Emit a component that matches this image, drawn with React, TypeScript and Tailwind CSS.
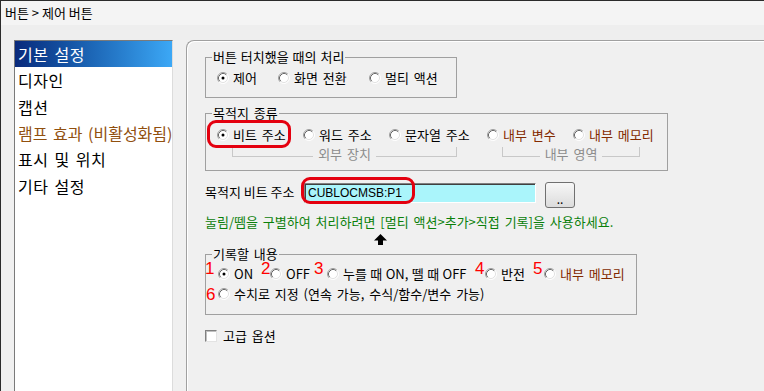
import React from "react";

const Radio = ({ checked = false }: { checked?: boolean }) => (
  <svg width="12" height="12" viewBox="0 0 12 12" className="shrink-0 block">
    <circle cx="6" cy="6" r="5" fill="#ffffff" />
    <path d="M2.11 9.89 A5.5 5.5 0 0 1 9.89 2.11" fill="none" stroke="#a0a0a0" strokeWidth="1" />
    <path d="M9.89 2.11 A5.5 5.5 0 0 1 2.11 9.89" fill="none" stroke="#ffffff" strokeWidth="1" />
    <path d="M2.82 9.18 A4.5 4.5 0 0 1 9.18 2.82" fill="none" stroke="#696969" strokeWidth="1" />
    <path d="M9.18 2.82 A4.5 4.5 0 0 1 2.82 9.18" fill="none" stroke="#e3e3e3" strokeWidth="1" />
    {checked && <circle cx="6" cy="6" r="1.5" fill="#000000" />}
  </svg>
);

const Opt = ({
  w,
  checked,
  label,
  color = "text-black",
  digit,
  digitPos,
  extra = "",
}: {
  w: string;
  checked?: boolean;
  label: string;
  color?: string;
  digit?: string;
  digitPos?: string;
  extra?: string;
}) => (
  <div className={`relative flex items-center h-[16px] shrink-0 ${w}`}>
    {digit && (
      <span
        className={`absolute text-[17px] leading-[12px] text-[#ff0000] font-['Liberation_Sans',sans-serif] ${digitPos}`}
      >
        {digit}
      </span>
    )}
    <Radio checked={checked} />
    <span className={`ml-[4px] text-[13px] leading-[16px] whitespace-nowrap ${color} ${extra}`}>{label}</span>
  </div>
);

const Bracket = ({ w, label, ml }: { w: string; label: string; ml: string }) => (
  <div className={`flex h-[18px] ${w} ${ml}`}>
    <div className="flex-1 h-[10px] border-l border-b border-[#c8c8c8]" />
    <span className="px-[5px] text-[13px] leading-[16px] text-[#8c8c8c] -mt-[1px]">{label}</span>
    <div className="flex-1 h-[10px] border-r border-b border-[#c8c8c8]" />
  </div>
);

const listItems = [
  { t: "기본 설정", sel: true },
  { t: "디자인" },
  { t: "캡션" },
  { t: "램프 효과 (비활성화됨)", c: "text-[#91500f] text-[14.5px] tracking-[0px]" },
  { t: "표시 및 위치" },
  { t: "기타 설정" },
];

export default function App() {
  return (
    <div className="w-[764px] h-[391px] overflow-hidden bg-[#f0f0f0] border-t border-l border-[#2b2b2b] flex flex-col font-['Noto_Sans_CJK_KR','Noto_Sans',sans-serif] text-black [word-spacing:2px]">
      {/* title area */}
      <div className="h-[39px] shrink-0 flex flex-col">
        <div className="h-[24px] bg-[#f4f4f4] pl-[4px] pt-[4px] text-[13px] leading-[16px] [word-spacing:0px]">
          버튼 &gt; 제어 버튼
        </div>
        <div className="flex-1 bg-[#eeeeee]" />
      </div>

      <div className="flex flex-1 min-h-0">
        {/* list */}
        <div className="ml-[13px] w-[159px] bg-white border-l border-t border-[#7a7a7a] border-r border-r-[#dcdcdc] flex flex-col">
          {listItems.map((it) => (
            <div
              key={it.t}
              className={`h-[26.3px] shrink-0 flex items-center pl-[3px] text-[16px] tracking-[0.5px] leading-[20px] whitespace-nowrap ${
                it.sel
                  ? "bg-linear-to-r from-[#0a2a7c] to-[#3ca8f6] text-white"
                  : it.c ?? "text-black"
              }`}
            >
              {it.t}
            </div>
          ))}
        </div>

        {/* panel */}
        <div className="ml-[13px] flex-1 rounded-tl-[8px] border-l border-t border-[#a0a0a0] shadow-[inset_1px_1px_0_#ffffff] pl-[18px] pt-[8px] flex flex-col items-start">
          {/* group 1 */}
          <fieldset className="w-[252px] border border-[#a0a0a0] p-0 m-0">
            <legend className="ml-[6px] px-[1px] text-[13px] leading-[16px] [word-spacing:1px]">버튼 터치했을 때의 처리</legend>
            <div className="pl-[11px] pt-[5px] pb-[11px] flex">
              <Opt w="w-[61px]" checked label="제어" />
              <Opt w="w-[91px]" label="화면 전환" />
              <Opt w="w-[80px]" label="멀티 액션" />
            </div>
          </fieldset>

          {/* group 2 */}
          <fieldset className="mt-[7px] w-[463px] border border-[#a0a0a0] p-0 m-0">
            <legend className="ml-[6px] px-[1px] text-[13px] leading-[16px]">목적지 종류</legend>
            <div className="relative pt-[6px] pb-[5px]">
              <div className="pl-[11px] flex">
                <Opt w="w-[86px]" checked label="비트 주소" />
                <Opt w="w-[86px]" label="워드 주소" />
                <Opt w="w-[98px]" label="문자열 주소" />
                <Opt w="w-[86px]" label="내부 변수" color="text-[#832a00]" />
                <Opt w="w-[80px]" label="내부 메모리" color="text-[#832a00]" />
              </div>
              <div className="mt-[4px] flex">
                <Bracket ml="ml-[26px]" w="w-[225px]" label="외부 장치" />
                <Bracket ml="ml-[45px]" w="w-[138px]" label="내부 영역" />
              </div>
              <div className="absolute left-[1px] top-[-1px] w-[84px] h-[28px] border-[3px] border-[#e4000f] rounded-[9px]" />
            </div>
          </fieldset>

          {/* address row */}
          <div className="relative mt-[11px] flex items-start h-[26px]">
            <span className="w-[99px] mt-[2px] text-[13px] leading-[16px] whitespace-nowrap [word-spacing:0px]">목적지 비트 주소</span>
            <div className="mt-[1px] w-[232px] h-[20px] bg-[#aaf5fb] border-t border-l border-[#808080] border-b border-r border-b-white border-r-white shadow-[inset_1px_1px_0_#404040] flex items-center pl-[3px] text-[12px] leading-[14px] font-['Liberation_Sans',sans-serif] [word-spacing:0px]">
              CUBLOCMSB:P1
            </div>
            <div className="ml-[9px] w-[30px] h-[26px] border border-[#707070] rounded-[3px] bg-linear-to-b from-[#f7f7f7] to-[#dcdcdc] flex items-center justify-center pt-[7px] text-[12px] leading-[12px]">
              ..
            </div>
            <div className="absolute left-[96px] top-[-5px] w-[114px] h-[27px] border-[3px] border-[#e4000f] rounded-[9px]" />
          </div>

          {/* green hint */}
          <div className="mt-[6px] text-[13px] leading-[16px] text-[#0a800a] whitespace-nowrap">
            눌림/뗌을 구별하여 처리하려면 [멀티 액션&gt;추가&gt;직접 기록]을 사용하세요.
          </div>

          {/* arrow */}
          <svg width="13" height="11" viewBox="0 0 13 11" className="mt-[4px] ml-[169px] block">
            <path d="M6.5 0 L13 6.5 L9 6.5 L9 11 L4 11 L4 6.5 L0 6.5 Z" fill="#000000" />
          </svg>

          {/* group 3 */}
          <fieldset className="mt-[1px] w-[432px] border border-[#a0a0a0] p-0 m-0">
            <legend className="ml-[6px] px-[1px] text-[13px] leading-[16px]">기록할 내용</legend>
            <div className="pt-[4px] pb-[12px] pl-[12px]">
              <div className="flex">
                <Opt w="w-[52px]" checked label="ON" digit="1" digitPos="-left-[13px] -top-[3px]" />
                <Opt w="w-[57px]" label="OFF" digit="2" digitPos="-left-[9px] -top-[3px]" />
                <Opt w="w-[158px]" label="누를 때 ON, 뗄 때 OFF" extra="[word-spacing:0.5px]" digit="3" digitPos="-left-[13px] -top-[3px]" />
                <Opt w="w-[59px]" label="반전" digit="4" digitPos="-left-[10px] -top-[3px]" />
                <Opt w="w-[80px]" label="내부 메모리" color="text-[#832a00]" digit="5" digitPos="-left-[11px] -top-[3px]" />
              </div>
              <div className="flex mt-[4px]">
                <Opt w="w-[300px]" label="수치로 지정 (연속 가능, 수식/함수/변수 가능)" digit="6" digitPos="-left-[12px] top-[3px]" />
              </div>
            </div>
          </fieldset>

          {/* checkbox */}
          <div className="mt-[13px] flex items-center h-[16px]">
            <div className="w-[12px] h-[12px] bg-white border-t border-l border-[#808080] border-b border-r border-b-[#e3e3e3] border-r-[#e3e3e3] shadow-[inset_1px_1px_0_#c0c0c0]" />
            <span className="ml-[6px] text-[13px] leading-[16px]">고급 옵션</span>
          </div>
        </div>
      </div>
    </div>
  );
}
